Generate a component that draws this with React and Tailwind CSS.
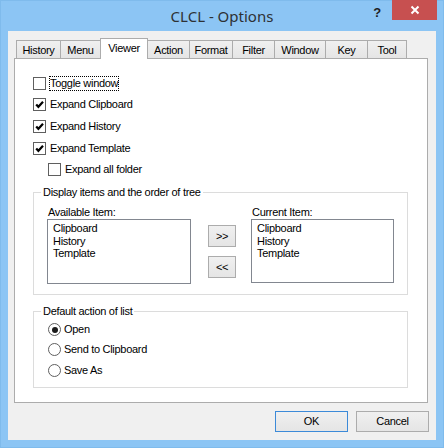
import React from 'react'

const tabs = [
    { name: 'History', w: 'w-[45px]' },
    { name: 'Menu', w: 'w-[41px]' },
    { name: 'Viewer', w: 'w-[48px]', active: true },
    { name: 'Action', w: 'w-[43px]' },
    { name: 'Format', w: 'w-[44px]' },
    { name: 'Filter', w: 'w-[43px]' },
    { name: 'Window', w: 'w-[52px]' },
    { name: 'Key', w: 'w-[43px]' },
    { name: 'Tool', w: 'w-[40px]' },
]

const items = ['Clipboard', 'History', 'Template']

function CheckBox({ checked, label, focused, className = '', mt = '' }) {
    return (
        <div className={`flex items-center h-[13px] ${mt} ${className}`}>
            <div className="w-[13px] h-[13px] border border-[#5f5f5f] bg-white flex items-center justify-center shrink-0">
                {checked && (
                    <svg width="11" height="11" viewBox="0 0 11 11">
                        <path d="M2.2 5.4 L4.4 7.8 L9 2.8" fill="none" stroke="#000" strokeWidth="2.2" />
                    </svg>
                )}
            </div>
            <span className={`ml-[3px] leading-[13px] border ${focused ? 'border-dotted border-black' : 'border-transparent'}`}>
                {label}
            </span>
        </div>
    )
}

function Radio({ checked, label, mt = '' }) {
    return (
        <div className={`flex items-center h-[13px] ${mt}`}>
            <div className="w-[13px] h-[13px] rounded-full border border-[#5f5f5f] bg-white flex items-center justify-center shrink-0">
                {checked && <div className="w-[6px] h-[6px] rounded-full bg-[#1a1a1a]" />}
            </div>
            <span className="ml-[3px] leading-[13px]">{label}</span>
        </div>
    )
}

function ListBox({ h }) {
    return (
        <div className={`${h} border border-[#828790] bg-white pl-[5px] pt-[2px]`}>
            {items.map((item) => (
                <div key={item} className="leading-[12.5px]">{item}</div>
            ))}
        </div>
    )
}

function SmallButton({ children, mt = '' }) {
    return (
        <div className={`w-[28px] h-[22px] border border-[#acacac] bg-gradient-to-b from-[#f0f0f0] to-[#e5e5e5] flex items-center justify-center ${mt}`}>
            {children}
        </div>
    )
}

export default function App() {
    return (
        <div className="w-[444px] h-[448px] bg-[#8cc5f4] border border-[#7fbbec] flex flex-col font-['Liberation_Sans',Arial,sans-serif] text-[11px] tracking-[-0.3px] text-black">
            {/* title bar */}
            <div className="h-[30px] grid grid-cols-[1fr_auto_1fr] items-start">
                <div />
                <div className="mt-[4px] font-['Noto_Sans',sans-serif] text-[15px] tracking-normal text-[#2e3135] leading-[22px]">CLCL - Options</div>
                <div className="flex justify-end -mt-px mr-[6px]">
                    <div className="w-[30px] h-[20px] flex items-center justify-center font-bold text-[13px] text-[#1e1e1e] pt-[5px]">?</div>
                    <div className="w-[45px] h-[20px] bg-[#c75050] flex items-center justify-center">
                        <svg width="10" height="10" viewBox="0 0 10 10">
                            <path d="M1.5 1.5 L8.5 8.5 M8.5 1.5 L1.5 8.5" stroke="#fff" strokeWidth="2" />
                        </svg>
                    </div>
                </div>
            </div>

            {/* client area */}
            <div className="mx-[7px] h-[409px] bg-[#f0f0f0] flex flex-col">
                {/* tabs */}
                <div className="ml-[8px] mt-[7px] h-[20px] flex items-end">
                    {tabs.map((tab, i) => (
                        tab.active ? (
                            <div key={tab.name} className={`${tab.w} ${i > 0 ? '-ml-px' : ''} h-[21px] -mb-px relative z-10 bg-white border border-b-0 border-[#acacac] flex justify-center pt-[3px]`}>
                                <span className="leading-[13px]">{tab.name}</span>
                            </div>
                        ) : (
                            <div key={tab.name} className={`${tab.w} ${i > 0 ? '-ml-px' : ''} h-[18px] bg-gradient-to-b from-[#f0f0f0] to-[#e5e5e5] border border-b-0 border-[#acacac] flex justify-center pt-[3px]`}>
                                <span className="leading-[13px]">{tab.name}</span>
                            </div>
                        )
                    ))}
                </div>

                {/* panel */}
                <div className="ml-[6px] w-[414px] h-[345px] bg-white border border-[#acacac] pt-[18px] pl-[18px]">
                    <CheckBox label="Toggle window" focused />
                    <CheckBox label="Expand Clipboard" checked mt="mt-[8px]" />
                    <CheckBox label="Expand History" checked mt="mt-[9px]" />
                    <CheckBox label="Expand Template" checked mt="mt-[9px]" />
                    <CheckBox label="Expand all folder" mt="mt-[8px]" className="ml-[15px]" />

                    <fieldset className="mt-[10px] w-[375px] border border-[#dcdcdc] p-0 pb-[10px]">
                        <legend className="ml-[7px] px-[2px] leading-[13px]">Display items and the order of tree</legend>
                        <div className="flex mt-[7px] ml-[13px]">
                            <div className="w-[144px]">
                                <div className="ml-[1px] leading-[13px]">Available Item:</div>
                                <ListBox h="h-[65px]" />
                            </div>
                            <div className="ml-[17px] mt-[19px]">
                                <SmallButton>&gt;&gt;</SmallButton>
                                <SmallButton mt="mt-[9px]">&lt;&lt;</SmallButton>
                            </div>
                            <div className="ml-[15px] w-[143px]">
                                <div className="ml-[1px] leading-[13px]">Current Item:</div>
                                <ListBox h="h-[64px]" />
                            </div>
                        </div>
                    </fieldset>

                    <fieldset className="mt-[10px] w-[375px] border border-[#dcdcdc] p-0 pb-[10px]">
                        <legend className="ml-[7px] px-[2px] leading-[13px]">Default action of list</legend>
                        <div className="ml-[14px]">
                            <Radio label="Open" checked mt="mt-[5px]" />
                            <Radio label="Send to Clipboard" mt="mt-[7px]" />
                            <Radio label="Save As" mt="mt-[8px]" />
                        </div>
                    </fieldset>
                </div>

                {/* dialog buttons */}
                <div className="mt-[8px] flex justify-end gap-[8px] pr-[7px]">
                    <div className="w-[73px] h-[21px] border border-[#3c8ad8] bg-gradient-to-b from-[#f0f0f0] to-[#e5e5e5] flex items-center justify-center">OK</div>
                    <div className="w-[73px] h-[21px] border border-[#acacac] bg-gradient-to-b from-[#f0f0f0] to-[#e5e5e5] flex items-center justify-center">Cancel</div>
                </div>
            </div>
        </div>
    )
}
